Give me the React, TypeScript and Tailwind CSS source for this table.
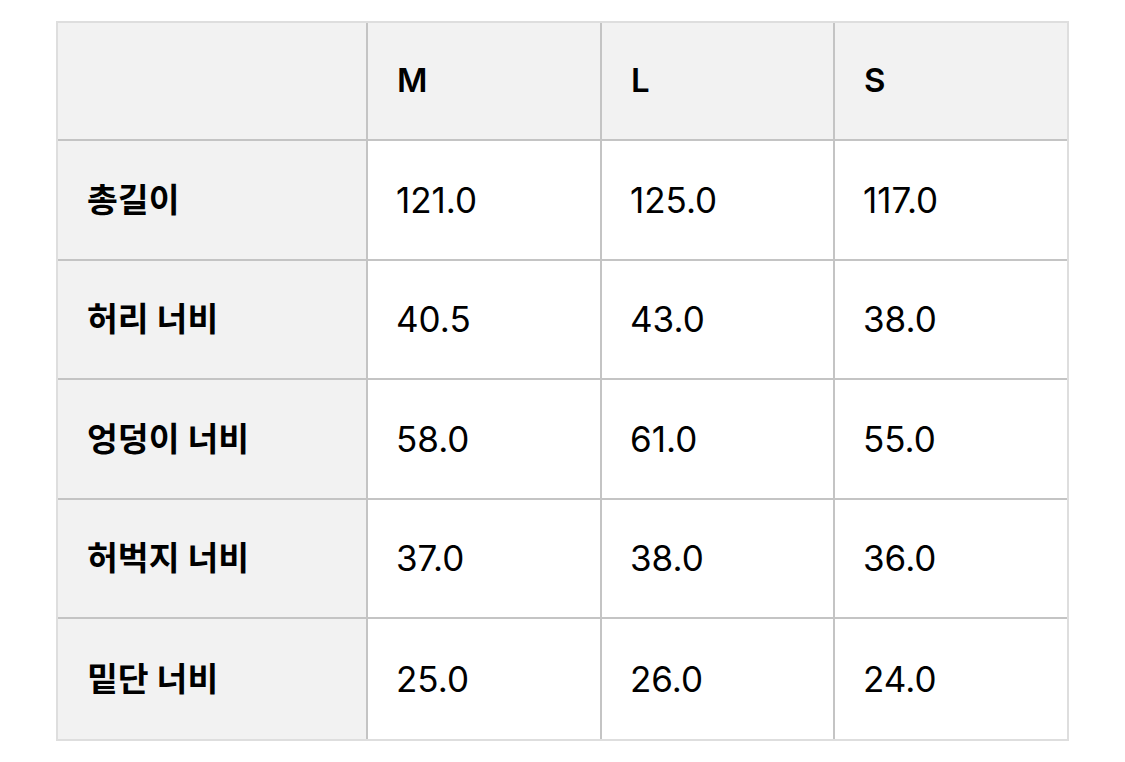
const sizes = ['M', 'L', 'S']

const rows: { label: string; values: string[] }[] = [
    { label: '총길이', values: ['121.0', '125.0', '117.0'] },
    { label: '허리 너비', values: ['40.5', '43.0', '38.0'] },
    { label: '엉덩이 너비', values: ['58.0', '61.0', '55.0'] },
    { label: '허벅지 너비', values: ['37.0', '38.0', '36.0'] },
    { label: '밑단 너비', values: ['25.0', '26.0', '24.0'] },
]

const font = { fontFamily: 'Inter, "Noto Sans CJK KR", sans-serif' }

export default function App() {
    return (
        <div className="min-h-screen bg-white pl-[56px] pt-[21px]" style={font}>
            <div className="w-[1013px] border-2 border-[#dedede]">
                <div className="grid grid-cols-[310px_234px_233px_232px]">
                    {/* header row */}
                    <div className="h-[118px] border-r-2 border-b-2 border-[#c4c4c4] bg-[#f2f2f2]" />
                    {sizes.map((s, i) => (
                        <div
                            key={s}
                            className={`flex h-[118px] items-center border-b-2 border-[#c4c4c4] bg-[#f2f2f2] pl-[29px] text-[33px] font-semibold text-black ${
                                i < sizes.length - 1 ? 'border-r-2' : ''
                            }`}
                        >
                            {s}
                        </div>
                    ))}

                    {rows.map((row, r) => {
                        const last = r === rows.length - 1
                        return (
                            <div key={row.label} className="contents">
                                <div
                                    className={`flex h-[119.5px] items-center border-r-2 border-[#c4c4c4] bg-[#f2f2f2] pl-[29px] text-[33.5px] font-bold text-black ${
                                        last ? '' : 'border-b-2'
                                    }`}
                                >
                                    {row.label}
                                </div>
                                {row.values.map((v, i) => (
                                    <div
                                        key={i}
                                        className={`flex h-[119.5px] items-center border-[#c4c4c4] bg-white pl-[28px] text-[35px] font-normal text-black ${
                                            last ? '' : 'border-b-2'
                                        } ${i < row.values.length - 1 ? 'border-r-2' : ''}`}
                                    >
                                        {v}
                                    </div>
                                ))}
                            </div>
                        )
                    })}
                </div>
            </div>
        </div>
    )
}
